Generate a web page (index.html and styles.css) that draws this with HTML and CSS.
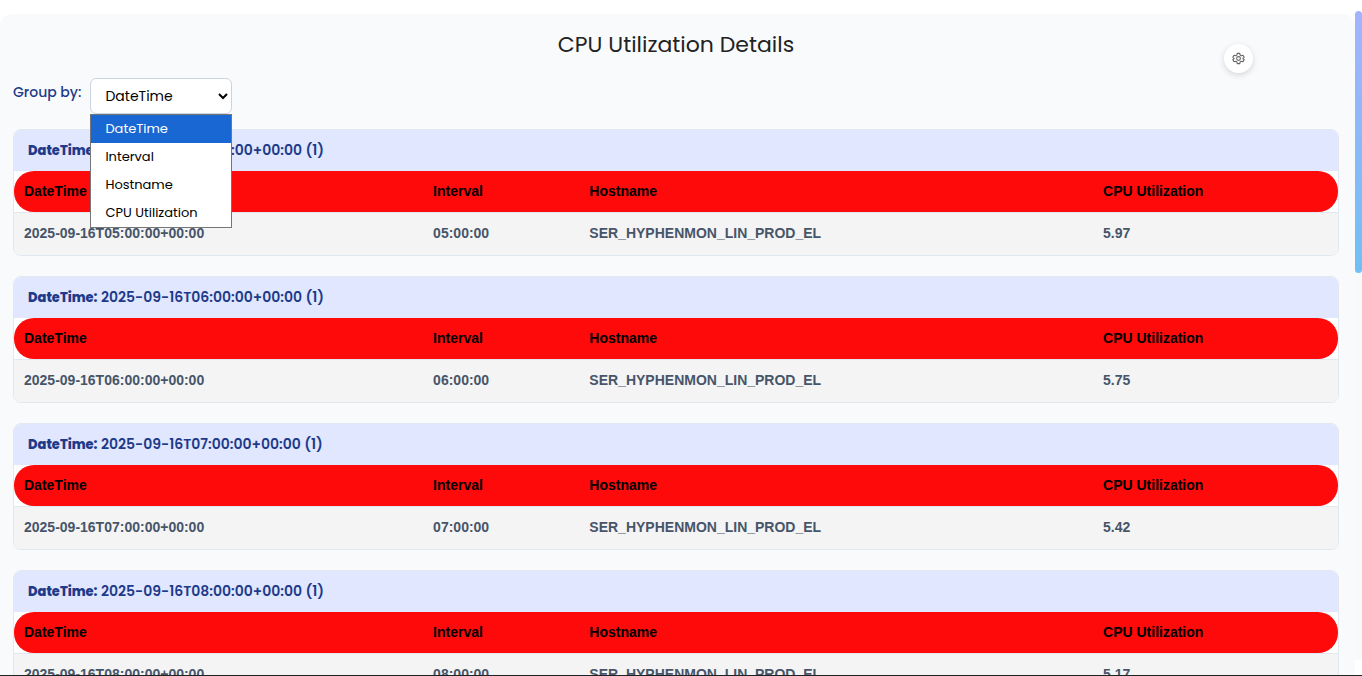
FILE: index.html
```html
<!DOCTYPE html>
<html lang="en">
<head>
<meta charset="utf-8">
<meta name="viewport" content="width=device-width, initial-scale=1">
<title>CPU Utilization Details</title>
<link rel="stylesheet" href="styles.css">
</head>
<body>
<div class="page">
  <main class="panel">
    <header class="panel-header">
      <h1 class="title">CPU Utilization Details</h1>
      <button class="settings" type="button" aria-label="Settings">
        <svg viewBox="0 0 24 24" width="13" height="13" fill="none" stroke="#666" stroke-width="2" stroke-linejoin="round" aria-hidden="true">
          <path d="M9.700 2.500h4.600l.7 3.200 2 1.200 3.200-1 2.300 4-2.500 2.100 2.500 2.100-2.300 4-3.200-1-2 1.200-.7 3.200H9.700l-.7-3.200-2-1.200-3.200 1-2.300-4L4 12 1.500 9.900l2.300-4 3.200 1 2-1.200z"/>
          <circle cx="12" cy="12" r="3.500"/>
        </svg>
      </button>
    </header>

    <div class="toolbar">
      <label class="toolbar-label" for="group-by">Group by:</label>
      <div class="picker">
        <select class="picker-select" id="group-by">
          <option selected>DateTime</option>
          <option>Interval</option>
          <option>Hostname</option>
          <option>CPU Utilization</option>
        </select>
        <svg class="picker-arrow" viewBox="0 0 10 7" width="10" height="7" fill="none" stroke="#000" stroke-width="2" aria-hidden="true"><path d="M1 1l4 4 4-4"/></svg>
        <div class="picker-menu" role="listbox" aria-label="Group by">
          <button class="picker-option is-selected" type="button" role="option" aria-selected="true">DateTime</button>
          <button class="picker-option" type="button" role="option" aria-selected="false">Interval</button>
          <button class="picker-option" type="button" role="option" aria-selected="false">Hostname</button>
          <button class="picker-option" type="button" role="option" aria-selected="false">CPU Utilization</button>
        </div>
      </div>
    </div>

    <div class="groups">
      <section class="group">
        <h2 class="group-title"><strong>DateTime:</strong> 2025-09-16T05:00:00+00:00 (1)</h2>
        <table class="grid">
          <thead><tr><th class="col-date">DateTime</th><th class="col-interval">Interval</th><th class="col-host">Hostname</th><th>CPU Utilization</th></tr></thead>
          <tbody><tr><td>2025-09-16T05:00:00+00:00</td><td>05:00:00</td><td>SER_HYPHENMON_LIN_PROD_EL</td><td>5.97</td></tr></tbody>
        </table>
      </section>
      <section class="group">
        <h2 class="group-title"><strong>DateTime:</strong> 2025-09-16T06:00:00+00:00 (1)</h2>
        <table class="grid">
          <thead><tr><th class="col-date">DateTime</th><th class="col-interval">Interval</th><th class="col-host">Hostname</th><th>CPU Utilization</th></tr></thead>
          <tbody><tr><td>2025-09-16T06:00:00+00:00</td><td>06:00:00</td><td>SER_HYPHENMON_LIN_PROD_EL</td><td>5.75</td></tr></tbody>
        </table>
      </section>
      <section class="group">
        <h2 class="group-title"><strong>DateTime:</strong> 2025-09-16T07:00:00+00:00 (1)</h2>
        <table class="grid">
          <thead><tr><th class="col-date">DateTime</th><th class="col-interval">Interval</th><th class="col-host">Hostname</th><th>CPU Utilization</th></tr></thead>
          <tbody><tr><td>2025-09-16T07:00:00+00:00</td><td>07:00:00</td><td>SER_HYPHENMON_LIN_PROD_EL</td><td>5.42</td></tr></tbody>
        </table>
      </section>
      <section class="group">
        <h2 class="group-title"><strong>DateTime:</strong> 2025-09-16T08:00:00+00:00 (1)</h2>
        <table class="grid">
          <thead><tr><th class="col-date">DateTime</th><th class="col-interval">Interval</th><th class="col-host">Hostname</th><th>CPU Utilization</th></tr></thead>
          <tbody><tr><td>2025-09-16T08:00:00+00:00</td><td>08:00:00</td><td>SER_HYPHENMON_LIN_PROD_EL</td><td>5.17</td></tr></tbody>
        </table>
      </section>
    </div>
  </main>
  <div class="scroll-track" aria-hidden="true"><div class="scroll-thumb"></div></div>
</div>
</body>
</html>
```
FILE: styles.css
```css
* {
  box-sizing: border-box;
}

body {
  margin: 0;
  background: #fff;
  font-family: Poppins, Inter, "Liberation Sans", sans-serif;
}

.page {
  display: flex;
  height: 100vh;
  overflow: hidden;
  border-bottom: 1px solid #202124;
}

.panel {
  flex: 1;
  align-self: flex-start;
  margin-top: 14px;
  padding: 16px 16px 20px 13px;
  border-radius: 12px;
  background: #f9fafc;
}

.panel-header {
  position: relative;
}

.title {
  margin: 0;
  color: #222;
  font-size: 22px;
  font-weight: 400;
  line-height: 30px;
  text-align: center;
}

.settings {
  position: absolute;
  top: 14px;
  right: 86px;
  display: grid;
  place-items: center;
  width: 29px;
  height: 29px;
  padding: 0;
  border: 0;
  border-radius: 50%;
  background: #fff;
  box-shadow: 0 2px 6px rgba(0, 0, 0, 0.15);
}

.toolbar {
  display: flex;
  align-items: flex-start;
  gap: 9px;
  margin-top: 18px;
}

.toolbar-label {
  color: #1e3a8a;
  font-size: 14px;
  font-weight: 500;
  line-height: 28px;
}

.picker {
  position: relative;
  width: 142px;
}

.picker-select {
  display: block;
  width: 100%;
  height: 36px;
  padding: 0 14px;
  appearance: none;
  border: 1px solid #cbd5e1;
  border-radius: 6px;
  background: #fff;
  color: #000;
  font-family: inherit;
  font-size: 14px;
}

.picker-arrow {
  position: absolute;
  top: 15px;
  right: 4px;
  pointer-events: none;
}

.picker-menu {
  position: absolute;
  top: 36px;
  left: 0;
  z-index: 2;
  width: 100%;
  border: 1px solid #767676;
  background: #fff;
}

.picker-option {
  display: block;
  width: 100%;
  height: 28px;
  padding: 0 14px;
  border: 0;
  background: #fff;
  color: #000;
  font-family: inherit;
  font-size: 13px;
  text-align: left;
}

.picker-option.is-selected {
  background: #1967d2;
  color: #fff;
}

.groups {
  display: grid;
  gap: 20px;
  margin-top: 15px;
}

.group {
  overflow: hidden;
  border: 1px solid #e2e8f0;
  border-radius: 8px;
  background: #fff;
}

.group-title {
  margin: 0;
  padding: 0 14px;
  background: #e0e7ff;
  color: #1e3a8a;
  font-size: 14px;
  font-weight: 600;
  line-height: 41px;
}

.group-title strong {
  font-size: 13px;
  font-weight: 800;
}

.grid {
  width: 100%;
  table-layout: fixed;
  border-collapse: separate;
  border-spacing: 0;
  font-family: "Liberation Sans", Arial, sans-serif;
  font-size: 14px;
  font-weight: 700;
  line-height: 20px;
}

.grid th,
.grid td {
  padding: 0 10px 2px;
  text-align: left;
}

.grid th {
  height: 41px;
  background: #ff0a0a;
  color: #000;
}

.grid td {
  height: 43px;
  border-top: 1px solid #e2e8f0;
  background: #f4f4f4;
  color: #475569;
}

.grid th:first-child {
  border-radius: 20px 0 0 20px;
}

.grid th:last-child {
  border-radius: 0 20px 20px 0;
}

.grid td:first-child {
  border-radius: 0 0 0 8px;
}

.grid td:last-child {
  border-radius: 0 0 8px 0;
}

.col-date {
  width: 30.9%;
}

.col-interval {
  width: 11.8%;
}

.col-host {
  width: 38.8%;
}

.scroll-track {
  width: 7px;
  margin: 11px 0 15px;
  border-radius: 4px;
  background: #f8f9fa;
}

.scroll-thumb {
  height: 40.4%;
  border-radius: 4px;
  background: linear-gradient(#a3b4ff, #70bff5);
}
```
